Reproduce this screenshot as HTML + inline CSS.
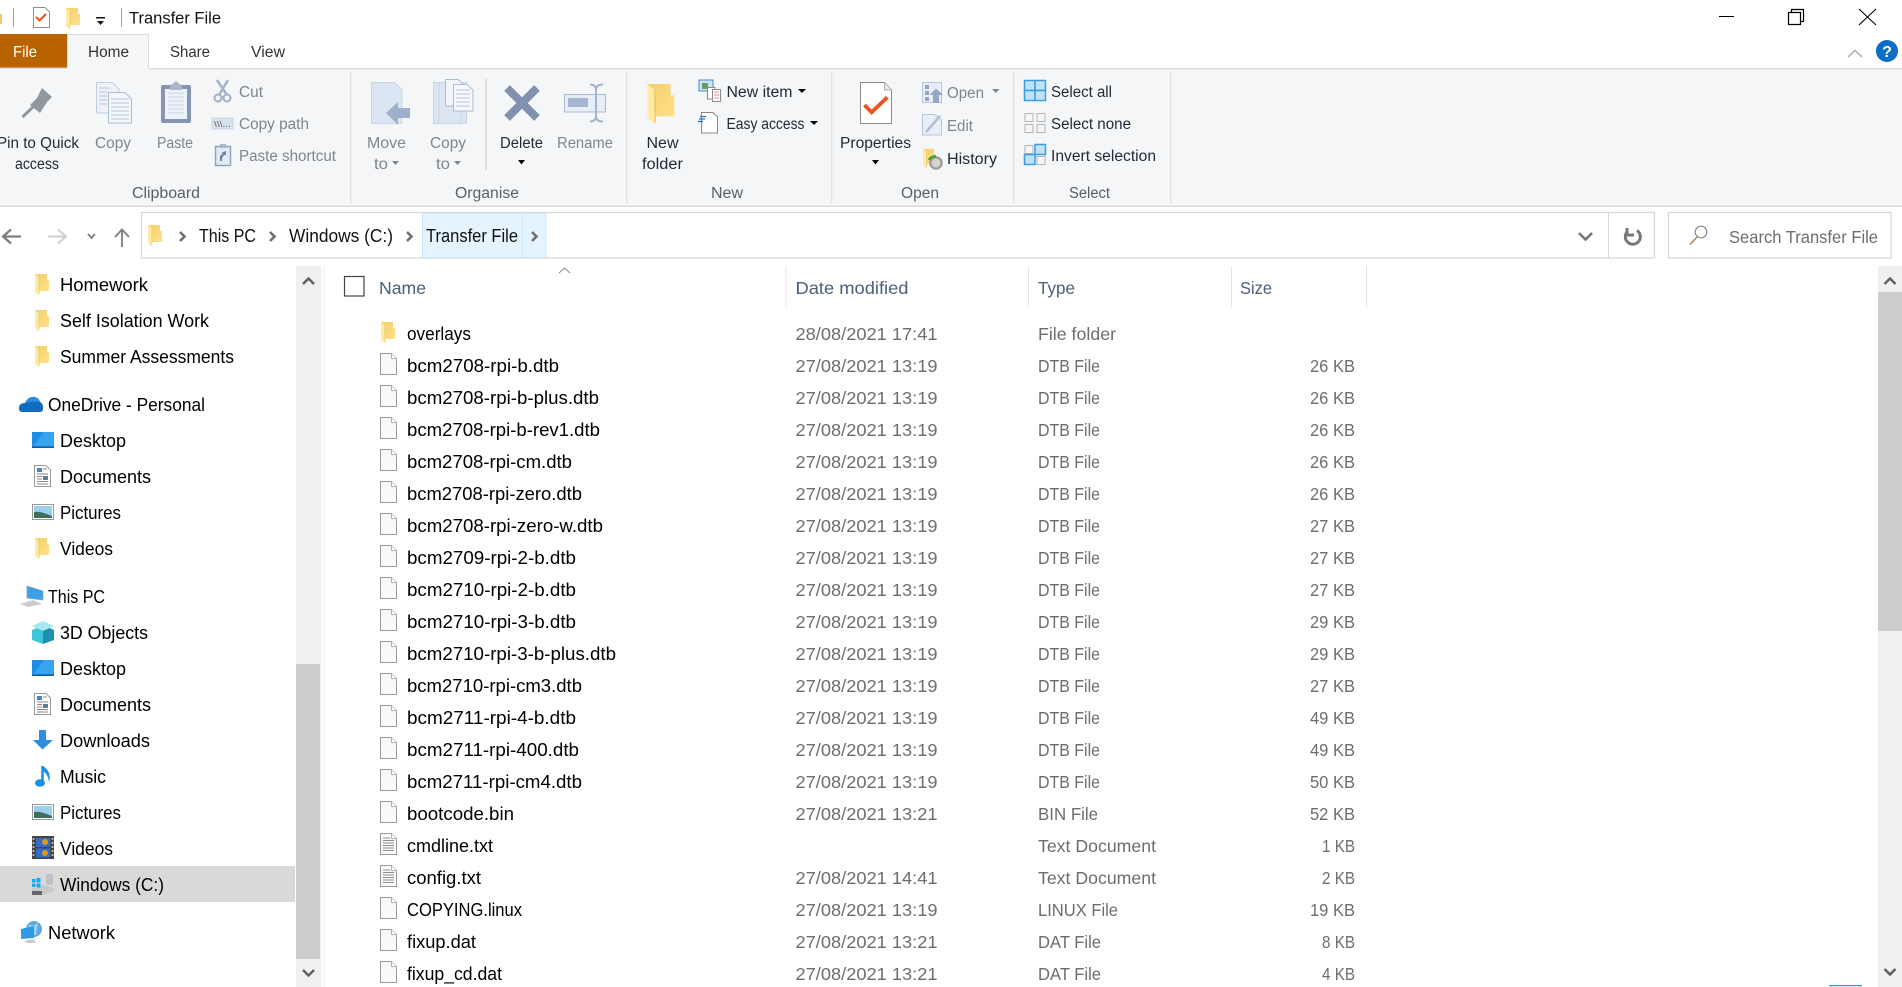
<!DOCTYPE html>
<html lang="en"><head><meta charset="utf-8"><title>Transfer File</title>
<style>
html,body{margin:0;padding:0;background:#fff;width:1902px;height:987px;overflow:hidden}
svg{display:block}
text{font-family:"Liberation Sans",sans-serif;white-space:pre}
.r{font-size:15.5px;fill:#444}
.g{font-size:15.5px;fill:#7f868f}
.k{font-size:15.5px;fill:#1f2a36}
.l{font-size:15.5px;fill:#5a5f66}
.s{font-size:18px;fill:#000}
.a{font-size:18px;fill:#111}
.h{font-size:17.5px;fill:#4c607a}
.n{font-size:18px;fill:#000}
.d{font-size:17.5px;fill:#6d6d6d}
</style></head><body>
<svg xmlns="http://www.w3.org/2000/svg" width="1902" height="987" viewBox="0 0 1902 987">
<defs>
<linearGradient id="fg" x1="0" y1="0" x2="1" y2="1"><stop offset="0" stop-color="#f3cf6c"/><stop offset="1" stop-color="#ffe08a"/></linearGradient>
<symbol id="folder" viewBox="0 0 14 21" overflow="visible">
<path d="M0 0H12V6H14V17H0Z" fill="url(#fg)"/>
<path d="M0 0L3.500 3V21L0 18Z" fill="#ffeaa8"/>
<path d="M3.500 3V21L4.300 20V4Z" fill="#eccb70"/>
</symbol>
<symbol id="page" viewBox="0 0 17 22">
<path d="M.5.5H11.5L16.5 5.5V21.5H.5Z" fill="#f8f9fa" stroke="#9b9b9b"/>
<path d="M11.5.5V5.5H16.5" fill="#fff" stroke="#b5b5b5"/>
</symbol>
<symbol id="txt" viewBox="0 0 17 22">
<path d="M.5.5H11.5L16.5 5.5V21.5H.5Z" fill="#f8f9fa" stroke="#9b9b9b"/>
<path d="M11.5.5V5.5H16.5" fill="#fff" stroke="#b5b5b5"/>
<path d="M3 5H10M3 7.5H14M3 10H14M3 12.5H14M3 15H14M3 17.5H14" stroke="#8f8f8f" stroke-width="1"/>
</symbol>
<symbol id="desk" viewBox="0 0 22 16"><rect width="22" height="16" fill="#1b8fe6"/><path d="M0 16L12 0H22V14H2Z" fill="#37a4f0"/><rect y="14.5" width="22" height="1.5" fill="#0d5f9f"/></symbol>
<symbol id="docs" viewBox="0 0 17 22"><path d="M.5.5H12L16.5 5V21.5H.5Z" fill="#fff" stroke="#999"/><path d="M3 3H8V7H3Z" fill="#3f86d6"/><path d="M9 4H13M3 9H14M3 11.5H8M3 14H8M3 16.5H14M3 19H14" stroke="#8a8a8a"/><rect x="9" y="11" width="5" height="4" fill="#5a7f9e"/></symbol>
<symbol id="pics" viewBox="0 0 22 16"><rect x=".5" y=".5" width="21" height="15" fill="#fff" stroke="#999"/><rect x="2" y="2" width="18" height="12" fill="#9cd0ef"/><path d="M2 8C8 7 12 9 20 12V14H2Z" fill="#3f6f5a"/></symbol>
</defs>

<!-- title bar -->
<rect x="0" y="14" width="2" height="10" fill="#f2cc66"/>
<rect x="13" y="8" width="1" height="19" fill="#a0a0a0"/>
<path d="M33.5 7.5H45L49.5 12V27.5H33.5Z" fill="#fff" stroke="#8f8f8f"/>
<path d="M36 17L39.5 20.5L46 14" fill="none" stroke="#e8501c" stroke-width="2"/>
<use href="#folder" x="66" y="8" width="14" height="21"/>
<path d="M96 17H105V18.5H96ZM97 21H104L100.500 25Z" fill="#111"/>
<rect x="121" y="8" width="1" height="19" fill="#a0a0a0"/>
<text x="129" y="23.500" font-size="17" fill="#111" textLength="92" lengthAdjust="spacingAndGlyphs">Transfer File</text>
<path d="M1719 16.500H1734" stroke="#000" stroke-width="1"/>
<path d="M1788.500 12.500H1800.500V24.500H1788.500ZM1791.500 12.500V9.500H1803.500V21.500H1800.500" fill="none" stroke="#000" stroke-width="1.200"/>
<path d="M1859 9L1876 25M1876 9L1859 25" stroke="#000" stroke-width="1.100"/>

<!-- tabs -->
<rect x="0" y="34" width="67" height="34" fill="#b86200"/>
<text x="13" y="57" class="r" style="fill:#fff" textLength="24" lengthAdjust="spacingAndGlyphs">File</text>
<path d="M67.500 68V34.500H148.500V68" fill="#f5f6f7" stroke="#dadbdc"/>
<text x="88" y="57" class="r" style="fill:#333" textLength="41" lengthAdjust="spacingAndGlyphs">Home</text>
<text x="170" y="57" class="r" style="fill:#333" textLength="40" lengthAdjust="spacingAndGlyphs">Share</text>
<text x="251" y="57" class="r" style="fill:#333" textLength="34" lengthAdjust="spacingAndGlyphs">View</text>
<path d="M1848 57L1855 50.500L1862 57" fill="none" stroke="#b5b5b5" stroke-width="1.600"/>
<circle cx="1887" cy="51" r="11" fill="#0e6ec5"/>
<text x="1887" y="57" font-size="16" font-weight="bold" fill="#fff" text-anchor="middle">?</text>

<!-- ribbon -->
<rect x="0" y="68" width="1902" height="138" fill="#f5f6f7"/>
<rect x="149" y="68" width="1753" height="1.500" fill="#dadbdc"/>
<rect x="0" y="67.500" width="67" height="1.500" fill="#dadbdc"/>
<rect x="0" y="205.500" width="1902" height="1.500" fill="#dadbdc"/>
<g fill="#e2e3e5"><rect x="350" y="72" width="1.300" height="131"/><rect x="626" y="72" width="1.300" height="131"/><rect x="831" y="72" width="1.300" height="131"/><rect x="1013" y="72" width="1.300" height="131"/><rect x="1170" y="72" width="1.300" height="131"/></g>
<rect x="485" y="79" width="2" height="91" fill="#dcdee0"/>

<!-- clipboard -->
<path d="M42 88L52 97L47 102L40 113L30 105L37 98Z" fill="#8f989f"/><path d="M22.500 117L34 106" stroke="#8f989f" stroke-width="3"/>
<text x="-3" y="148" class="k" textLength="82" lengthAdjust="spacingAndGlyphs">Pin to Quick</text>
<text x="15" y="169" class="k" textLength="44" lengthAdjust="spacingAndGlyphs">access</text>
<path d="M96.500 82.500H112L119 89V113H96.500Z" fill="#eef2f8" stroke="#c0cee2"/>
<path d="M108.500 92.500H125L131.500 99V123H108.500Z" fill="#f4f7fb" stroke="#a9bdd6"/>
<path d="M99 88H110M99 92H107M99 96H107M99 100H107M99 104H107M111 99H129M111 103H129M111 107H129M111 111H129M111 115H129M111 119H129" stroke="#b9c6db"/>
<text x="95" y="148" class="g" textLength="36" lengthAdjust="spacingAndGlyphs">Copy</text>
<rect x="161" y="85" width="30" height="38" rx="2" fill="#8595b3"/><rect x="165" y="89" width="22" height="30" fill="#eef2f9"/>
<path d="M168 93H184M168 97H184M168 101H184M168 105H184M168 109H184M168 113H184" stroke="#c8d3e5"/>
<path d="M170 90V86L176 81L182 86V90Z" fill="#a9b7ce"/>
<text x="157" y="148" class="g" textLength="36" lengthAdjust="spacingAndGlyphs">Paste</text>
<path d="M217 80L227 95M228 80L219 95" stroke="#a3b3ca" stroke-width="2.500" fill="none"/>
<circle cx="218" cy="98" r="3.500" fill="none" stroke="#9fb0c9" stroke-width="2"/><circle cx="227" cy="98" r="3.500" fill="none" stroke="#9fb0c9" stroke-width="2"/>
<text x="239" y="97" class="g" textLength="24" lengthAdjust="spacingAndGlyphs">Cut</text>
<rect x="212" y="118" width="21" height="11" fill="#d9e3f0" stroke="#c3d0e2" stroke-width=".8"/>
<text x="214" y="127" font-size="8.500" fill="#555" textLength="17" lengthAdjust="spacingAndGlyphs">\\\...</text>
<text x="239" y="129" class="g" textLength="70" lengthAdjust="spacingAndGlyphs">Copy path</text>
<rect x="215.500" y="146.500" width="15" height="19" fill="#e3eaf4" stroke="#8fa2bf" stroke-width="1.500"/><rect x="220" y="144" width="6" height="4" fill="#a9b7ce"/>
<path d="M220 161V156L223 153H221L226 151V155H224L222 158V161Z" fill="#6d84a6"/>
<text x="239" y="161" class="g" textLength="97" lengthAdjust="spacingAndGlyphs">Paste shortcut</text>
<text x="132" y="198" class="l" textLength="68" lengthAdjust="spacingAndGlyphs">Clipboard</text>

<!-- organise -->
<path d="M371.500 82.500H395L402 90V123.500H371.500Z" fill="#dce6f3" stroke="#c8d6e8"/>
<path d="M386 113L398 102V108H410V118H398V125Z" fill="#9fb0cb"/>
<text x="367" y="148" class="g" textLength="39" lengthAdjust="spacingAndGlyphs">Move</text>
<text x="374" y="169" class="g" textLength="14" lengthAdjust="spacingAndGlyphs">to</text>
<path d="M392 161H399L395.500 165Z" fill="#7f868f"/>
<rect x="433.500" y="82.500" width="33" height="41" fill="#dce6f3" stroke="#c8d6e8"/><path d="M439 83V123M461 83V123" stroke="#c8d6e8"/>
<path d="M445.500 79.500H458L465 86V106H445.500Z" fill="#f2f5fa" stroke="#a9bdd6"/>
<path d="M453.500 84.500H467L473 90V111H453.500Z" fill="#f6f8fc" stroke="#a9bdd6"/>
<path d="M456 90H470M456 94H470M456 98H470M456 102H470M456 106H470" stroke="#b5c4da"/>
<text x="430" y="148" class="g" textLength="36" lengthAdjust="spacingAndGlyphs">Copy</text>
<text x="436" y="169" class="g" textLength="14" lengthAdjust="spacingAndGlyphs">to</text>
<path d="M454 161H461L457.500 165Z" fill="#7f868f"/>
<path d="M507 88L537 118M537 88L507 118" stroke="#8292ae" stroke-width="8"/>
<text x="500" y="148" class="k" textLength="43" lengthAdjust="spacingAndGlyphs">Delete</text>
<path d="M518 160H525L521.500 164.500Z" fill="#000"/>
<rect x="564.500" y="94.500" width="41" height="17.500" fill="#e8eef7" stroke="#a8bbd6"/><rect x="568" y="98" width="20" height="9" fill="#a6b6d0"/>
<path d="M590 84.500Q596 84.500 596 90V116Q596 121.500 590 121.500M603 84.500Q596 84.500 596 90M603 121.500Q596 121.500 596 116" fill="none" stroke="#a3b4cd" stroke-width="2"/>
<text x="557" y="148" class="g" textLength="56" lengthAdjust="spacingAndGlyphs">Rename</text>
<text x="455" y="198" class="l" textLength="64" lengthAdjust="spacingAndGlyphs">Organise</text>

<!-- new -->
<use href="#folder" x="647" y="84" width="28" height="40"/>
<text x="646.500" y="148" class="k" textLength="32" lengthAdjust="spacingAndGlyphs">New</text>
<text x="642" y="169" class="k" textLength="41" lengthAdjust="spacingAndGlyphs">folder</text>
<rect x="699" y="80" width="14" height="11" fill="#cfe3f5" stroke="#3f8fc8"/><rect x="702" y="83" width="6" height="6" fill="#6a9a5a"/>
<path d="M707.500 87.500H715V99H707.500Z" fill="#fff" stroke="#8a8a8a"/><path d="M712.500 89.500H720.500V101.500H712.500Z" fill="#fff" stroke="#8a8a8a"/><path d="M714 92H719M714 95H719M714 98H719" stroke="#d88"/>
<text x="726.500" y="97" class="k" textLength="66" lengthAdjust="spacingAndGlyphs">New item</text>
<path d="M798 89H806L802 93Z" fill="#000"/>
<path d="M701.500 112.500H713L717.500 117V133H701.500Z" fill="#fff" stroke="#888"/>
<path d="M700 116.500H706M699 119H705M698 121.500H703" stroke="#1c74c4" stroke-width="1.200"/>
<text x="726.500" y="129" class="k" textLength="78" lengthAdjust="spacingAndGlyphs">Easy access</text>
<path d="M810 121H818L814 125Z" fill="#000"/>
<text x="711" y="198" class="l" textLength="32" lengthAdjust="spacingAndGlyphs">New</text>

<!-- open -->
<path d="M860.500 82.500H884.500L891.500 90V123.500H860.500Z" fill="#fff" stroke="#8a8a8a"/><path d="M884.500 82.500V90H891.500" fill="#e8e8e8" stroke="#b0b0b0"/>
<path d="M864.500 105L871.700 112.300L887.300 97.300" fill="none" stroke="#e8561e" stroke-width="3.800"/>
<text x="840" y="148" class="k" textLength="71" lengthAdjust="spacingAndGlyphs">Properties</text>
<path d="M872 160H879L875.500 164.500Z" fill="#000"/>
<rect x="922.500" y="82.500" width="19" height="20" fill="#e8eef7" stroke="#b6c6dc"/>
<rect x="925" y="85" width="4" height="4" fill="#93a5bf"/><rect x="925" y="91" width="4" height="4" fill="#93a5bf"/><rect x="925" y="97" width="4" height="4" fill="#93a5bf"/>
<path d="M933 103V95H929.500L936 88.500L943 95H939V103Z" fill="#93a8c5"/>
<text x="947" y="98" class="g" textLength="37" lengthAdjust="spacingAndGlyphs">Open</text>
<path d="M992 89H999.500L995.800 93Z" fill="#7f868f"/>
<path d="M922.500 114.500H935L941.500 120V135H922.500Z" fill="#e8eef7" stroke="#b6c6dc"/><path d="M926 132L940 116" stroke="#b1bfd3" stroke-width="2.500"/>
<text x="947" y="131" class="g" textLength="26" lengthAdjust="spacingAndGlyphs">Edit</text>
<use href="#folder" x="923" y="148" width="13" height="21"/>
<circle cx="936" cy="163" r="6.800" fill="#9c9c9c"/><circle cx="936" cy="163" r="4.500" fill="#d5d5d5"/>
<path d="M929 160A7 7 0 0 1 936 156.500" fill="none" stroke="#3aa52b" stroke-width="2.500"/>
<text x="947" y="164" class="k" textLength="50" lengthAdjust="spacingAndGlyphs">History</text>
<text x="901" y="198" class="l" textLength="38" lengthAdjust="spacingAndGlyphs">Open</text>

<!-- select -->
<g fill="#bfe3fb" stroke="#3a9de0" stroke-width="1.500"><rect x="1024.500" y="80.500" width="10.500" height="10"/><rect x="1035" y="80.500" width="10.500" height="10"/><rect x="1024.500" y="90.500" width="10.500" height="10"/><rect x="1035" y="90.500" width="10.500" height="10"/></g>
<text x="1051" y="97" class="k" textLength="61" lengthAdjust="spacingAndGlyphs">Select all</text>
<g fill="#f5f6f7" stroke="#b5b5b5"><rect x="1025" y="113.500" width="8" height="8"/><rect x="1037" y="113.500" width="8" height="8"/><rect x="1025" y="124.500" width="8" height="8"/><rect x="1037" y="124.500" width="8" height="8"/></g>
<text x="1051" y="129" class="k" textLength="80" lengthAdjust="spacingAndGlyphs">Select none</text>
<g fill="#f5f6f7" stroke="#b5b5b5"><rect x="1025" y="145.500" width="8" height="8"/><rect x="1037" y="156.500" width="8" height="8"/></g>
<g fill="#bfe3fb" stroke="#3a9de0" stroke-width="1.500"><rect x="1035" y="144.500" width="10.500" height="10"/><rect x="1024.500" y="154.500" width="10.500" height="10"/></g>
<text x="1051" y="161" class="k" textLength="105" lengthAdjust="spacingAndGlyphs">Invert selection</text>
<text x="1069" y="198" class="l" textLength="41" lengthAdjust="spacingAndGlyphs">Select</text>

<!-- address bar -->
<path d="M21 236.500H4M11 229.500L3 236.500L11 243.500" fill="none" stroke="#7e7e7e" stroke-width="2.300"/>
<path d="M48 236.500H65M58 229.500L66 236.500L58 243.500" fill="none" stroke="#d2d2d2" stroke-width="2.300"/>
<path d="M88 234L91.500 238L95 234" fill="none" stroke="#7e7e7e" stroke-width="1.800"/>
<path d="M122 247V230M115 237L122 229.500L129 237" fill="none" stroke="#7e7e7e" stroke-width="1.800"/>
<rect x="141.500" y="212.500" width="1513" height="45.500" fill="#fff" stroke="#d9d9d9" stroke-width="1.300"/>
<rect x="422.500" y="213.500" width="123.500" height="44" fill="#e5f3ff" stroke="#cce8ff"/><path d="M522.500 214V257" stroke="#cce8ff"/>
<use href="#folder" x="148" y="225" width="14" height="21"/>
<g fill="none" stroke="#707070" stroke-width="2.600"><path d="M180 232L184.500 236.500L180 241"/><path d="M270 232L274.500 236.500L270 241"/><path d="M407 232L411.500 236.500L407 241"/><path d="M532 232L536.500 236.500L532 241"/></g>
<text x="199" y="242" class="a" textLength="57" lengthAdjust="spacingAndGlyphs">This PC</text>
<text x="289" y="242" class="a" textLength="104" lengthAdjust="spacingAndGlyphs">Windows (C:)</text>
<text x="426" y="242" class="a" textLength="92" lengthAdjust="spacingAndGlyphs">Transfer File</text>
<path d="M1579 233L1585.500 239.500L1592 233" fill="none" stroke="#777" stroke-width="2.600"/>
<path d="M1608.500 213V258" stroke="#d9d9d9"/>
<path d="M1628 231A7.500 7.500 0 1 0 1637 230.500M1627 228V235H1634" fill="none" stroke="#777" stroke-width="3"/>
<rect x="1668.500" y="212.500" width="222.500" height="45.500" fill="#fff" stroke="#d9d9d9" stroke-width="1.300"/>
<circle cx="1701" cy="232" r="5.800" fill="none" stroke="#8a8a8a" stroke-width="1.200"/><path d="M1697 237L1690 244.500" stroke="#b08a50" stroke-width="1.600"/>
<text x="1729" y="243" font-size="17.500" fill="#6d6d6d" textLength="149" lengthAdjust="spacingAndGlyphs">Search Transfer File</text>

<!-- sidebar -->
<rect x="0" y="866" width="295" height="36" fill="#d9d9d9"/>
<rect x="296" y="266" width="25" height="721" fill="#f0f0f0"/>
<rect x="296" y="664" width="24" height="295" fill="#cdcdcd"/>
<rect x="323" y="266" width="2" height="721" fill="#f7f7f7"/>
<path d="M303 284L308.500 278.500L314 284M303 970L308.500 975.500L314 970" fill="none" stroke="#606060" stroke-width="2.400"/>
<use href="#folder" x="35" y="274" width="14" height="21"/>
<use href="#folder" x="35" y="310" width="14" height="21"/>
<use href="#folder" x="35" y="346" width="14" height="21"/>
<path d="M22 412Q19 412 19 408Q19 403 25 403Q28 396 35 397Q39 398 40 402Q43 403 43 408Q43 412 40 412Z" fill="#0f6cc0"/><path d="M25 403Q28 396 35 397Q39 398 40 402Q33 401 25 403Z" fill="#2b8fe0"/>
<use href="#desk" x="32" y="432" width="22" height="16"/>
<use href="#docs" x="34" y="465" width="17" height="22"/>
<use href="#pics" x="32" y="504" width="22" height="16"/>
<use href="#folder" x="35" y="538" width="14" height="21"/>
<path d="M27 586L43 591V600L27 598Z" fill="#3aa0ea" stroke="#8ab" stroke-width=".8"/><path d="M20 604L33 600L42 604L28 607Z" fill="#c8ccd0"/>
<path d="M43 625L54 630V640L43 644Z" fill="#1f8fb0"/><path d="M43 625L32 630V640L43 644Z" fill="#3fc5d8"/><path d="M43 621L54 626L43 631L32 626Z" fill="#a5e8ee"/>
<use href="#desk" x="32" y="660" width="22" height="16"/>
<use href="#docs" x="34" y="693" width="17" height="22"/>
<path d="M39 730H46V740H53L42.500 749.500L33 740H39Z" fill="#2f8de0"/>
<path d="M42.500 766V782" stroke="#1790e8" stroke-width="2.500"/><ellipse cx="40" cy="783" rx="5" ry="3.800" fill="#1790e8"/><path d="M43 766Q52 772 49 782Q48 774 43 771Z" fill="#1790e8"/>
<use href="#pics" x="32" y="804" width="22" height="16"/>
<rect x="32" y="836" width="22" height="23" fill="#444"/><rect x="36" y="838" width="14" height="9" fill="#2f6fcb"/><rect x="36" y="848.500" width="14" height="9" fill="#2f6fcb"/><circle cx="45" cy="842" r="3" fill="#d99a1f"/><circle cx="45" cy="853" r="3" fill="#d99a1f"/><path d="M33.500 838V858M52.500 838V858" stroke="#bbb" stroke-dasharray="2 2" stroke-width="1.800"/>
<path d="M32 889L44 885L54 888V891L42 895H32Z" fill="#c6c9cc"/><path d="M32 891H42V895H32Z" fill="#666"/>
<g fill="#18a8ee"><rect x="32" y="879" width="3.500" height="3.500"/><rect x="36.500" y="878" width="4" height="4.500"/><rect x="32" y="883.500" width="3.500" height="3.500"/><rect x="36.500" y="883.500" width="4" height="4"/></g>
<rect x="46" y="874" width="7" height="11" rx="2" fill="#bcc2c7"/>
<circle cx="34" cy="929" r="8" fill="#5fa8dd"/><path d="M28 924Q34 928 38 922L36 935L30 935Z" fill="#9ad3f0"/>
<path d="M21 929L34 926V938L21 939Z" fill="#2f9ae4"/><path d="M24 941L34 939L36 943H27Z" fill="#c8ccd0"/>

<text x="60" y="291" class="s" textLength="88" lengthAdjust="spacingAndGlyphs">Homework</text>
<text x="60" y="327" class="s" textLength="149" lengthAdjust="spacingAndGlyphs">Self Isolation Work</text>
<text x="60" y="363" class="s" textLength="174" lengthAdjust="spacingAndGlyphs">Summer Assessments</text>
<text x="48" y="411" class="s" textLength="157" lengthAdjust="spacingAndGlyphs">OneDrive - Personal</text>
<text x="60" y="447" class="s" textLength="66" lengthAdjust="spacingAndGlyphs">Desktop</text>
<text x="60" y="483" class="s" textLength="91" lengthAdjust="spacingAndGlyphs">Documents</text>
<text x="60" y="519" class="s" textLength="61" lengthAdjust="spacingAndGlyphs">Pictures</text>
<text x="60" y="555" class="s" textLength="53" lengthAdjust="spacingAndGlyphs">Videos</text>
<text x="48" y="603" class="s" textLength="57" lengthAdjust="spacingAndGlyphs">This PC</text>
<text x="60" y="639" class="s" textLength="88" lengthAdjust="spacingAndGlyphs">3D Objects</text>
<text x="60" y="675" class="s" textLength="66" lengthAdjust="spacingAndGlyphs">Desktop</text>
<text x="60" y="711" class="s" textLength="91" lengthAdjust="spacingAndGlyphs">Documents</text>
<text x="60" y="747" class="s" textLength="90" lengthAdjust="spacingAndGlyphs">Downloads</text>
<text x="60" y="783" class="s" textLength="46" lengthAdjust="spacingAndGlyphs">Music</text>
<text x="60" y="819" class="s" textLength="61" lengthAdjust="spacingAndGlyphs">Pictures</text>
<text x="60" y="855" class="s" textLength="53" lengthAdjust="spacingAndGlyphs">Videos</text>
<text x="60" y="891" class="s" textLength="104" lengthAdjust="spacingAndGlyphs">Windows (C:)</text>
<text x="48" y="939" class="s" textLength="67" lengthAdjust="spacingAndGlyphs">Network</text>

<!-- list header -->
<rect x="344.500" y="276.500" width="19.500" height="19.500" fill="#fff" stroke="#444" stroke-width="1.200"/>
<path d="M559 273L564.500 268L570 273" fill="none" stroke="#888" stroke-width="1"/>
<text x="379" y="294" class="h" textLength="47" lengthAdjust="spacingAndGlyphs">Name</text>
<text x="795.500" y="294" class="h" textLength="113" lengthAdjust="spacingAndGlyphs">Date modified</text>
<text x="1038" y="294" class="h" textLength="37" lengthAdjust="spacingAndGlyphs">Type</text>
<text x="1240" y="294" class="h" textLength="32" lengthAdjust="spacingAndGlyphs">Size</text>
<g fill="#e3e3e3"><rect x="785.500" y="266" width="1" height="41"/><rect x="1028" y="266" width="1" height="41"/><rect x="1231" y="266" width="1" height="41"/><rect x="1366" y="266" width="1" height="41"/></g>

<!-- rows -->
<use href="#folder" x="381" y="322" width="14" height="21"/>
<text x="407" y="340" class="n" textLength="64" lengthAdjust="spacingAndGlyphs">overlays</text><text x="795.500" y="340" class="d" textLength="142" lengthAdjust="spacingAndGlyphs">28/08/2021 17:41</text><text x="1038" y="340" class="d" textLength="78" lengthAdjust="spacingAndGlyphs">File folder</text>

<use href="#page" x="380" y="353" width="17" height="22"/><text x="407" y="372" class="n" textLength="152" lengthAdjust="spacingAndGlyphs">bcm2708-rpi-b.dtb</text><text x="795.500" y="372" class="d" textLength="142" lengthAdjust="spacingAndGlyphs">27/08/2021 13:19</text><text x="1038" y="372" class="d" textLength="62" lengthAdjust="spacingAndGlyphs">DTB File</text><text x="1310" y="372" class="d" textLength="45" lengthAdjust="spacingAndGlyphs">26 KB</text>
<use href="#page" x="380" y="385" width="17" height="22"/><text x="407" y="404" class="n" textLength="192" lengthAdjust="spacingAndGlyphs">bcm2708-rpi-b-plus.dtb</text><text x="795.500" y="404" class="d" textLength="142" lengthAdjust="spacingAndGlyphs">27/08/2021 13:19</text><text x="1038" y="404" class="d" textLength="62" lengthAdjust="spacingAndGlyphs">DTB File</text><text x="1310" y="404" class="d" textLength="45" lengthAdjust="spacingAndGlyphs">26 KB</text>
<use href="#page" x="380" y="417" width="17" height="22"/><text x="407" y="436" class="n" textLength="193" lengthAdjust="spacingAndGlyphs">bcm2708-rpi-b-rev1.dtb</text><text x="795.500" y="436" class="d" textLength="142" lengthAdjust="spacingAndGlyphs">27/08/2021 13:19</text><text x="1038" y="436" class="d" textLength="62" lengthAdjust="spacingAndGlyphs">DTB File</text><text x="1310" y="436" class="d" textLength="45" lengthAdjust="spacingAndGlyphs">26 KB</text>
<use href="#page" x="380" y="449" width="17" height="22"/><text x="407" y="468" class="n" textLength="165" lengthAdjust="spacingAndGlyphs">bcm2708-rpi-cm.dtb</text><text x="795.500" y="468" class="d" textLength="142" lengthAdjust="spacingAndGlyphs">27/08/2021 13:19</text><text x="1038" y="468" class="d" textLength="62" lengthAdjust="spacingAndGlyphs">DTB File</text><text x="1310" y="468" class="d" textLength="45" lengthAdjust="spacingAndGlyphs">26 KB</text>
<use href="#page" x="380" y="481" width="17" height="22"/><text x="407" y="500" class="n" textLength="175" lengthAdjust="spacingAndGlyphs">bcm2708-rpi-zero.dtb</text><text x="795.500" y="500" class="d" textLength="142" lengthAdjust="spacingAndGlyphs">27/08/2021 13:19</text><text x="1038" y="500" class="d" textLength="62" lengthAdjust="spacingAndGlyphs">DTB File</text><text x="1310" y="500" class="d" textLength="45" lengthAdjust="spacingAndGlyphs">26 KB</text>
<use href="#page" x="380" y="513" width="17" height="22"/><text x="407" y="532" class="n" textLength="196" lengthAdjust="spacingAndGlyphs">bcm2708-rpi-zero-w.dtb</text><text x="795.500" y="532" class="d" textLength="142" lengthAdjust="spacingAndGlyphs">27/08/2021 13:19</text><text x="1038" y="532" class="d" textLength="62" lengthAdjust="spacingAndGlyphs">DTB File</text><text x="1310" y="532" class="d" textLength="45" lengthAdjust="spacingAndGlyphs">27 KB</text>
<use href="#page" x="380" y="545" width="17" height="22"/><text x="407" y="564" class="n" textLength="169" lengthAdjust="spacingAndGlyphs">bcm2709-rpi-2-b.dtb</text><text x="795.500" y="564" class="d" textLength="142" lengthAdjust="spacingAndGlyphs">27/08/2021 13:19</text><text x="1038" y="564" class="d" textLength="62" lengthAdjust="spacingAndGlyphs">DTB File</text><text x="1310" y="564" class="d" textLength="45" lengthAdjust="spacingAndGlyphs">27 KB</text>
<use href="#page" x="380" y="577" width="17" height="22"/><text x="407" y="596" class="n" textLength="169" lengthAdjust="spacingAndGlyphs">bcm2710-rpi-2-b.dtb</text><text x="795.500" y="596" class="d" textLength="142" lengthAdjust="spacingAndGlyphs">27/08/2021 13:19</text><text x="1038" y="596" class="d" textLength="62" lengthAdjust="spacingAndGlyphs">DTB File</text><text x="1310" y="596" class="d" textLength="45" lengthAdjust="spacingAndGlyphs">27 KB</text>
<use href="#page" x="380" y="609" width="17" height="22"/><text x="407" y="628" class="n" textLength="169" lengthAdjust="spacingAndGlyphs">bcm2710-rpi-3-b.dtb</text><text x="795.500" y="628" class="d" textLength="142" lengthAdjust="spacingAndGlyphs">27/08/2021 13:19</text><text x="1038" y="628" class="d" textLength="62" lengthAdjust="spacingAndGlyphs">DTB File</text><text x="1310" y="628" class="d" textLength="45" lengthAdjust="spacingAndGlyphs">29 KB</text>
<use href="#page" x="380" y="641" width="17" height="22"/><text x="407" y="660" class="n" textLength="209" lengthAdjust="spacingAndGlyphs">bcm2710-rpi-3-b-plus.dtb</text><text x="795.500" y="660" class="d" textLength="142" lengthAdjust="spacingAndGlyphs">27/08/2021 13:19</text><text x="1038" y="660" class="d" textLength="62" lengthAdjust="spacingAndGlyphs">DTB File</text><text x="1310" y="660" class="d" textLength="45" lengthAdjust="spacingAndGlyphs">29 KB</text>
<use href="#page" x="380" y="673" width="17" height="22"/><text x="407" y="692" class="n" textLength="175" lengthAdjust="spacingAndGlyphs">bcm2710-rpi-cm3.dtb</text><text x="795.500" y="692" class="d" textLength="142" lengthAdjust="spacingAndGlyphs">27/08/2021 13:19</text><text x="1038" y="692" class="d" textLength="62" lengthAdjust="spacingAndGlyphs">DTB File</text><text x="1310" y="692" class="d" textLength="45" lengthAdjust="spacingAndGlyphs">27 KB</text>
<use href="#page" x="380" y="705" width="17" height="22"/><text x="407" y="724" class="n" textLength="169" lengthAdjust="spacingAndGlyphs">bcm2711-rpi-4-b.dtb</text><text x="795.500" y="724" class="d" textLength="142" lengthAdjust="spacingAndGlyphs">27/08/2021 13:19</text><text x="1038" y="724" class="d" textLength="62" lengthAdjust="spacingAndGlyphs">DTB File</text><text x="1310" y="724" class="d" textLength="45" lengthAdjust="spacingAndGlyphs">49 KB</text>
<use href="#page" x="380" y="737" width="17" height="22"/><text x="407" y="756" class="n" textLength="172" lengthAdjust="spacingAndGlyphs">bcm2711-rpi-400.dtb</text><text x="795.500" y="756" class="d" textLength="142" lengthAdjust="spacingAndGlyphs">27/08/2021 13:19</text><text x="1038" y="756" class="d" textLength="62" lengthAdjust="spacingAndGlyphs">DTB File</text><text x="1310" y="756" class="d" textLength="45" lengthAdjust="spacingAndGlyphs">49 KB</text>
<use href="#page" x="380" y="769" width="17" height="22"/><text x="407" y="788" class="n" textLength="175" lengthAdjust="spacingAndGlyphs">bcm2711-rpi-cm4.dtb</text><text x="795.500" y="788" class="d" textLength="142" lengthAdjust="spacingAndGlyphs">27/08/2021 13:19</text><text x="1038" y="788" class="d" textLength="62" lengthAdjust="spacingAndGlyphs">DTB File</text><text x="1310" y="788" class="d" textLength="45" lengthAdjust="spacingAndGlyphs">50 KB</text>
<use href="#page" x="380" y="801" width="17" height="22"/><text x="407" y="820" class="n" textLength="107" lengthAdjust="spacingAndGlyphs">bootcode.bin</text><text x="795.500" y="820" class="d" textLength="142" lengthAdjust="spacingAndGlyphs">27/08/2021 13:21</text><text x="1038" y="820" class="d" textLength="60" lengthAdjust="spacingAndGlyphs">BIN File</text><text x="1310" y="820" class="d" textLength="45" lengthAdjust="spacingAndGlyphs">52 KB</text>
<use href="#txt" x="380" y="833" width="17" height="22"/><text x="407" y="852" class="n" textLength="86" lengthAdjust="spacingAndGlyphs">cmdline.txt</text><text x="1038" y="852" class="d" textLength="118" lengthAdjust="spacingAndGlyphs">Text Document</text><text x="1322" y="852" class="d" textLength="33" lengthAdjust="spacingAndGlyphs">1 KB</text>
<use href="#txt" x="380" y="865" width="17" height="22"/><text x="407" y="884" class="n" textLength="74" lengthAdjust="spacingAndGlyphs">config.txt</text><text x="795.500" y="884" class="d" textLength="142" lengthAdjust="spacingAndGlyphs">27/08/2021 14:41</text><text x="1038" y="884" class="d" textLength="118" lengthAdjust="spacingAndGlyphs">Text Document</text><text x="1322" y="884" class="d" textLength="33" lengthAdjust="spacingAndGlyphs">2 KB</text>
<use href="#page" x="380" y="897" width="17" height="22"/><text x="407" y="916" class="n" textLength="115" lengthAdjust="spacingAndGlyphs">COPYING.linux</text><text x="795.500" y="916" class="d" textLength="142" lengthAdjust="spacingAndGlyphs">27/08/2021 13:19</text><text x="1038" y="916" class="d" textLength="80" lengthAdjust="spacingAndGlyphs">LINUX File</text><text x="1310" y="916" class="d" textLength="45" lengthAdjust="spacingAndGlyphs">19 KB</text>
<use href="#page" x="380" y="929" width="17" height="22"/><text x="407" y="948" class="n" textLength="69" lengthAdjust="spacingAndGlyphs">fixup.dat</text><text x="795.500" y="948" class="d" textLength="142" lengthAdjust="spacingAndGlyphs">27/08/2021 13:21</text><text x="1038" y="948" class="d" textLength="63" lengthAdjust="spacingAndGlyphs">DAT File</text><text x="1322" y="948" class="d" textLength="33" lengthAdjust="spacingAndGlyphs">8 KB</text>
<use href="#page" x="380" y="961" width="17" height="22"/><text x="407" y="980" class="n" textLength="95" lengthAdjust="spacingAndGlyphs">fixup_cd.dat</text><text x="795.500" y="980" class="d" textLength="142" lengthAdjust="spacingAndGlyphs">27/08/2021 13:21</text><text x="1038" y="980" class="d" textLength="63" lengthAdjust="spacingAndGlyphs">DAT File</text><text x="1322" y="980" class="d" textLength="33" lengthAdjust="spacingAndGlyphs">4 KB</text>

<!-- list scrollbar -->
<rect x="1878" y="266" width="24" height="721" fill="#f0f0f0"/>
<rect x="1878" y="292" width="24" height="339" fill="#cdcdcd"/>
<path d="M1884.500 284L1890 278.500L1895.500 284M1884.500 969L1890 974.500L1895.500 969" fill="none" stroke="#606060" stroke-width="2.400"/>
<rect x="1829" y="985" width="33" height="2" fill="#bfe6f5"/><path d="M1829 985.500H1862" stroke="#33a0dc"/>
</svg>
</body></html>
